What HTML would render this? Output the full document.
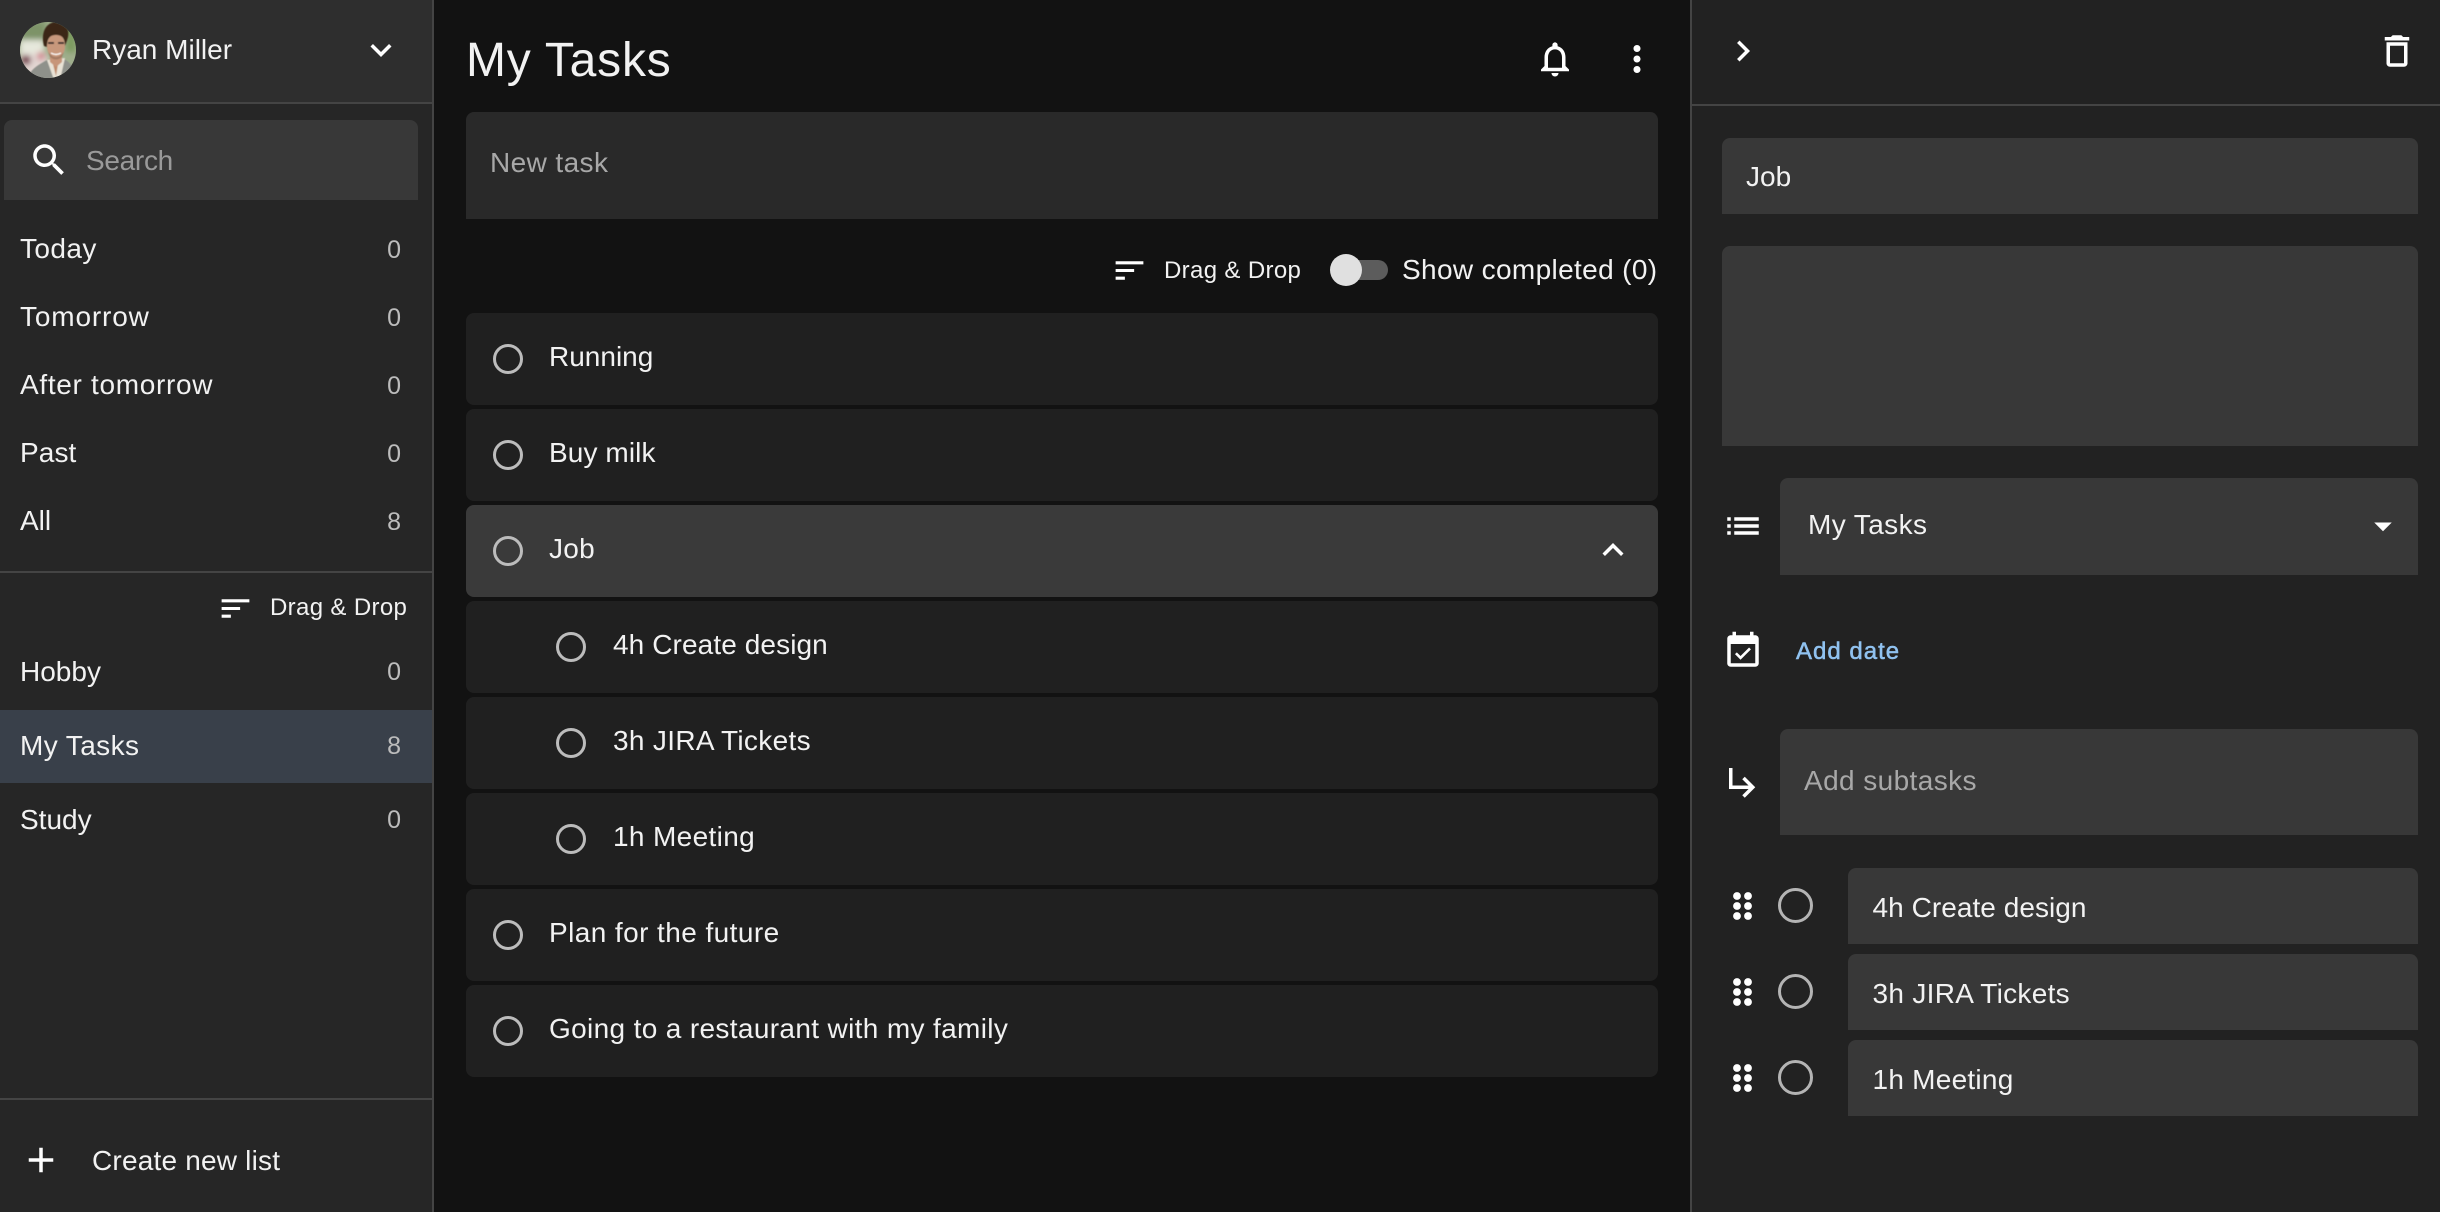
<!DOCTYPE html>
<html>
<head>
<meta charset="utf-8">
<style>
html,body{margin:0;padding:0;width:2440px;height:1212px;overflow:hidden;background:#121212;font-family:"Liberation Sans",sans-serif;color:#f2f2f2}
*{box-sizing:border-box}
.a{position:absolute}
.t{position:absolute;white-space:nowrap;font-size:28px;line-height:40px;height:40px;margin-top:1px}
svg{position:absolute;display:block;fill:#fff;overflow:visible}
.count{position:absolute;white-space:nowrap;font-size:25px;line-height:30px;height:30px;left:361px;color:#bcbcbc;width:40px;text-align:right;margin-top:1px}
.row{position:absolute;left:466px;width:1192px;height:92px;background:#202020;border-radius:8px}
.c{position:absolute;width:30px;height:30px;border:3px solid #bcbcbc;border-radius:50%;margin-left:.5px}
.box{position:absolute;background:#383838;border-radius:8px 8px 0 0}
.c2{position:absolute;width:35px;height:35px;border:3.5px solid #b4b4b4;border-radius:50%;left:1777.5px}
</style>
</head>
<body>

<!-- Left panel -->
<div class="a" style="left:0;top:0;width:432px;height:1212px;background:#262626"></div>
<div class="a" style="left:432px;top:0;width:2px;height:1212px;background:#444"></div>
<div class="a" style="left:0;top:0;width:432px;height:102px;background:#2e2e2e"></div>
<div class="a" style="left:0;top:102px;width:432px;height:2px;background:#444"></div>

<svg style="left:20px;top:22px" width="56" height="56" viewBox="0 0 56 56">
<defs><clipPath id="av"><circle cx="28" cy="28" r="28"/></clipPath>
<filter id="bl"><feGaussianBlur stdDeviation="3"/></filter>
<filter id="b1"><feGaussianBlur stdDeviation=".5"/></filter></defs>
<g clip-path="url(#av)">
<rect width="56" height="56" fill="#9fae8c"/>
<g filter="url(#bl)">
<rect x="0" y="0" width="26" height="20" fill="#7d9367"/>
<rect x="0" y="18" width="24" height="14" fill="#e6e8dc"/>
<rect x="0" y="32" width="28" height="24" fill="#e2d6d2"/>
<circle cx="6" cy="38" r="5" fill="#70283e"/>
<circle cx="21" cy="34" r="4" fill="#d07c88"/>
<rect x="46" y="0" width="10" height="30" fill="#7c9a5e"/>
</g>
<g filter="url(#b1)">
<path d="M8 58 C9 47 20 42 27 38 L44 37 C49 40 54 43 56 58Z" fill="#8f918b"/>
<path d="M27 38 L45 36 L40 58 L34 58Z" fill="#e8e2d6"/>
<path d="M33 42 L38 42 L36 54Z" fill="#c08a6a"/>
<path d="M30 32 L42 32 L42 40 L36 45 L30 40Z" fill="#c79579"/>
<ellipse cx="36" cy="24" rx="9" ry="12.5" fill="#c8987c"/>
<path d="M24 24 C20 8 28 0 36 0 C44 0 50 6 48 15 C47 19 46 21 45 24 C45 15 41 13 36 13 C31 13 27 15 27 25Z" fill="#3a2619"/>
<path d="M28 21 H34 M38 21 H44" stroke="#2c2420" stroke-width="1.8" fill="none"/>
<path d="M31 31 Q36 34 41 31" stroke="#fff" stroke-width="1.3" fill="none"/>
<path d="M28 30 Q36 40 44 30 L42 35 Q36 40 30 35Z" fill="#7a5e4c" opacity=".45"/>
</g>
</g>
</svg>
<div class="t" style="left:92px;top:29px">Ryan Miller</div>
<svg style="left:360px;top:29px" width="42" height="42" viewBox="0 0 24 24"><path d="M16.59 8.59L12 13.17 7.41 8.59 6 10l6 6 6-6z"/></svg>

<div class="box" style="left:4px;top:120px;width:414px;height:80px"></div>
<svg style="left:28px;top:139px" width="42" height="42" viewBox="0 0 24 24"><path d="M15.5 14h-.79l-.28-.27C15.41 12.59 16 11.11 16 9.5 16 5.91 13.09 3 9.5 3S3 5.91 3 9.5 5.91 16 9.5 16c1.61 0 3.09-.59 4.23-1.57l.27.28v.79l5 4.99L20.49 19l-4.99-5zm-6 0C7.01 14 5 11.99 5 9.5S7.01 5 9.5 5 14 7.01 14 9.5 11.99 14 9.5 14z"/></svg>
<div class="t" style="left:86px;top:140px;color:#9a9a9a;letter-spacing:-.3px">Search</div>

<div class="t" style="left:20px;top:228px;letter-spacing:.4px">Today</div><div class="count" style="top:234px">0</div>
<div class="t" style="left:20px;top:296px;letter-spacing:.85px">Tomorrow</div><div class="count" style="top:302px">0</div>
<div class="t" style="left:20px;top:364px;letter-spacing:.68px">After tomorrow</div><div class="count" style="top:370px">0</div>
<div class="t" style="left:20px;top:432px;letter-spacing:.1px">Past</div><div class="count" style="top:438px">0</div>
<div class="t" style="left:20px;top:500px">All</div><div class="count" style="top:506px">8</div>

<div class="a" style="left:0;top:571px;width:432px;height:2px;background:#444"></div>
<svg style="left:217px;top:590px" width="37" height="37" viewBox="0 0 24 24"><path d="M3 18h6v-2H3v2zM3 6v2h18V6H3zm0 7h12v-2H3v2z"/></svg>
<div class="t" style="left:270px;top:587px;font-size:24px;letter-spacing:.35px">Drag &amp; Drop</div>

<div class="t" style="left:20px;top:651px">Hobby</div><div class="count" style="top:656px">0</div>
<div class="a" style="left:0;top:710px;width:432px;height:73px;background:#39404a"></div>
<div class="t" style="left:20px;top:725px;letter-spacing:.4px">My Tasks</div><div class="count" style="top:730px">8</div>
<div class="t" style="left:20px;top:799px">Study</div><div class="count" style="top:804px">0</div>

<div class="a" style="left:0;top:1098px;width:432px;height:2px;background:#444"></div>
<svg style="left:20px;top:1139px" width="42" height="42" viewBox="0 0 24 24"><path d="M19 13h-6v6h-2v-6H5v-2h6V5h2v6h6v2z"/></svg>
<div class="t" style="left:92px;top:1140px;letter-spacing:.2px">Create new list</div>

<!-- Center -->
<div class="t" style="left:466px;top:30px;font-size:48px;line-height:60px;height:60px;letter-spacing:.8px">My Tasks</div>
<svg style="left:1534px;top:38px" width="42" height="42" viewBox="0 0 24 24"><path d="M12 22c1.1 0 2-.9 2-2h-4c0 1.1.9 2 2 2zm6-6v-5c0-3.07-1.64-5.64-4.5-6.32V4c0-.83-.67-1.5-1.5-1.5s-1.5.67-1.5 1.5v.68C7.63 5.36 6 7.92 6 11v5l-2 2v1h16v-1l-2-2zm-2 1H8v-6c0-2.48 1.51-4.5 4-4.5s4 2.02 4 4.5v6z"/></svg>
<svg style="left:1616px;top:38px" width="42" height="42" viewBox="0 0 24 24"><path d="M12 8c1.1 0 2-.9 2-2s-.9-2-2-2-2 .9-2 2 .9 2 2 2zm0 2c-1.1 0-2 .9-2 2s.9 2 2 2 2-.9 2-2-.9-2-2-2zm0 6c-1.1 0-2 .9-2 2s.9 2 2 2 2-.9 2-2-.9-2-2-2z"/></svg>

<div class="a" style="left:466px;top:112px;width:1192px;height:107px;background:#292929;border-radius:8px 8px 0 0"></div>
<div class="t" style="left:490px;top:142px;color:#a8a8a8;letter-spacing:.4px">New task</div>

<svg style="left:1111px;top:252px" width="37" height="37" viewBox="0 0 24 24"><path d="M3 18h6v-2H3v2zM3 6v2h18V6H3zm0 7h12v-2H3v2z"/></svg>
<div class="t" style="left:1164px;top:250px;font-size:24px;letter-spacing:.35px">Drag &amp; Drop</div>
<div class="a" style="left:1332px;top:260px;width:56px;height:20px;border-radius:10px;background:#5c5c5c"></div>
<div class="a" style="left:1330px;top:254px;width:32px;height:32px;border-radius:50%;background:#e0e0e0"></div>
<div class="t" style="left:1402px;top:249px;letter-spacing:.36px">Show completed (0)</div>

<div class="row" style="top:313px"></div><div class="c" style="left:492px;top:344px"></div><div class="t" style="left:549px;top:336px">Running</div>
<div class="row" style="top:409px"></div><div class="c" style="left:492px;top:440px"></div><div class="t" style="left:549px;top:432px;letter-spacing:.1px">Buy milk</div>
<div class="row" style="top:505px;background:#3a3a3a"></div><div class="c" style="left:492px;top:536px"></div><div class="t" style="left:549px;top:528px;letter-spacing:.3px">Job</div>
<svg style="left:1592px;top:529px" width="42" height="42" viewBox="0 0 24 24"><path d="M12 8l-6 6 1.41 1.41L12 10.83l4.59 4.58L18 14z"/></svg>
<div class="row" style="top:601px"></div><div class="c" style="left:555.5px;top:632px"></div><div class="t" style="left:613px;top:624px;letter-spacing:.1px">4h Create design</div>
<div class="row" style="top:697px"></div><div class="c" style="left:555.5px;top:728px"></div><div class="t" style="left:613px;top:720px;letter-spacing:.33px">3h JIRA Tickets</div>
<div class="row" style="top:793px"></div><div class="c" style="left:555.5px;top:824px"></div><div class="t" style="left:613px;top:816px;letter-spacing:.35px">1h Meeting</div>
<div class="row" style="top:889px"></div><div class="c" style="left:492px;top:920px"></div><div class="t" style="left:549px;top:912px;letter-spacing:.42px">Plan for the future</div>
<div class="row" style="top:985px"></div><div class="c" style="left:492px;top:1016px"></div><div class="t" style="left:549px;top:1008px;letter-spacing:.35px">Going to a restaurant with my family</div>

<!-- Right panel -->
<div class="a" style="left:1690px;top:0;width:750px;height:1212px;background:#222"></div>
<div class="a" style="left:1690px;top:0;width:2px;height:1212px;background:#444"></div>
<div class="a" style="left:1692px;top:104px;width:748px;height:2px;background:#444"></div>
<svg style="left:1722px;top:30px" width="42" height="42" viewBox="0 0 24 24"><path d="M10 6L8.59 7.41 13.17 12l-4.58 4.59L10 18l6-6z"/></svg>
<svg style="left:2376px;top:30px" width="42" height="42" viewBox="0 0 24 24"><path d="M6 19c0 1.1.9 2 2 2h8c1.1 0 2-.9 2-2V7H6v12zM8 9h8v10H8V9zm7.5-5l-1-1h-5l-1 1H5v2h14V4h-3.5z"/></svg>

<div class="box" style="left:1722px;top:138px;width:696px;height:76px"></div>
<div class="t" style="left:1746px;top:156px">Job</div>
<div class="box" style="left:1722px;top:246px;width:696px;height:200px"></div>

<svg style="left:1722px;top:505px" width="42" height="42" viewBox="0 0 24 24"><path d="M3 13h2v-2H3v2zm0 4h2v-2H3v2zm0-8h2V7H3v2zm4 4h14v-2H7v2zm0 4h14v-2H7v2zM7 7v2h14V7H7z"/></svg>
<div class="box" style="left:1780px;top:478px;width:638px;height:97px"></div>
<div class="t" style="left:1808px;top:504px;letter-spacing:.4px">My Tasks</div>
<svg style="left:2362px;top:505px" width="42" height="42" viewBox="0 0 24 24"><path d="M7 10l5 5 5-5z"/></svg>

<svg style="left:1722px;top:630px" width="42" height="42" viewBox="0 0 24 24"><path d="M16.53 11.06L15.47 10l-4.88 4.88-2.12-2.12-1.06 1.06L10.59 17l5.94-5.94zM19 3h-1V1h-2v2H8V1H6v2H5c-1.11 0-1.99.9-1.99 2L3 19c0 1.1.89 2 2 2h14c1.1 0 2-.9 2-2V5c0-1.1-.9-2-2-2zm0 16H5V8h14v11z"/></svg>
<div class="t" style="left:1796px;top:631px;font-size:24px;letter-spacing:1px;color:#90c2f0;-webkit-text-stroke:.5px #90c2f0">Add date</div>

<svg style="left:1722px;top:761px" width="42" height="42" viewBox="0 0 24 24"><path d="M19 15l-6 6-1.42-1.42L15.17 16H4V4h2v10h9.17l-3.59-3.58L13 9l6 6z"/></svg>
<div class="box" style="left:1780px;top:729px;width:638px;height:106px"></div>
<div class="t" style="left:1804px;top:760px;color:#a8a8a8;letter-spacing:.4px">Add subtasks</div>

<svg style="left:0;top:0" width="2440" height="1212" viewBox="0 0 2440 1212">
<g fill="#fff">
<circle cx="1737" cy="896" r="3.9"/><circle cx="1748" cy="896" r="3.9"/><circle cx="1737" cy="906" r="3.9"/><circle cx="1748" cy="906" r="3.9"/><circle cx="1737" cy="916" r="3.9"/><circle cx="1748" cy="916" r="3.9"/>
<circle cx="1737" cy="982" r="3.9"/><circle cx="1748" cy="982" r="3.9"/><circle cx="1737" cy="992" r="3.9"/><circle cx="1748" cy="992" r="3.9"/><circle cx="1737" cy="1002" r="3.9"/><circle cx="1748" cy="1002" r="3.9"/>
<circle cx="1737" cy="1068" r="3.9"/><circle cx="1748" cy="1068" r="3.9"/><circle cx="1737" cy="1078" r="3.9"/><circle cx="1748" cy="1078" r="3.9"/><circle cx="1737" cy="1088" r="3.9"/><circle cx="1748" cy="1088" r="3.9"/>
</g>
</svg>

<div class="c2" style="top:888px"></div>
<div class="box" style="left:1848px;top:868px;width:570px;height:76px"></div>
<div class="t" style="left:1872.5px;top:887px;letter-spacing:.05px">4h Create design</div>
<div class="c2" style="top:974px"></div>
<div class="box" style="left:1848px;top:954px;width:570px;height:76px"></div>
<div class="t" style="left:1872.5px;top:973px;letter-spacing:.3px">3h JIRA Tickets</div>
<div class="c2" style="top:1060px"></div>
<div class="box" style="left:1848px;top:1040px;width:570px;height:76px"></div>
<div class="t" style="left:1872.5px;top:1059px;letter-spacing:.25px">1h Meeting</div>

</body>
</html>
